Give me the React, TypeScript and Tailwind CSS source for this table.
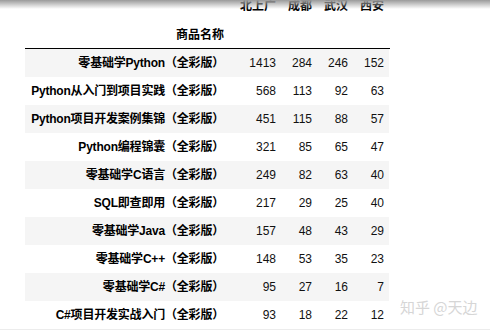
const rows: [string, number, number, number, number][] = [
  ["零基础学Python（全彩版）", 1413, 284, 246, 152],
  ["Python从入门到项目实践（全彩版）", 568, 113, 92, 63],
  ["Python项目开发案例集锦（全彩版）", 451, 115, 88, 57],
  ["Python编程锦囊（全彩版）", 321, 85, 65, 47],
  ["零基础学C语言（全彩版）", 249, 82, 63, 40],
  ["SQL即查即用（全彩版）", 217, 29, 25, 40],
  ["零基础学Java（全彩版）", 157, 48, 43, 29],
  ["零基础学C++（全彩版）", 148, 53, 35, 23],
  ["零基础学C#（全彩版）", 95, 27, 16, 7],
  ["C#项目开发实战入门（全彩版）", 93, 18, 22, 12],
];

const grid = "grid grid-cols-[205px_51px_36px_36px_36px] w-[364px]";

export default function App() {
  return (
    <div
      className="relative h-[330px] w-[490px] overflow-hidden bg-white text-[12px] text-[#111]"
      style={{ fontFamily: '"Liberation Sans", "Noto Sans CJK SC", sans-serif' }}
    >
      {/* top shadow */}
      <div className="absolute inset-x-0 top-0 h-[9px] bg-gradient-to-b from-[#9a9a9a] to-white/0" />

      <div className="pl-[25px]">
        {/* header */}
        <div className={`${grid} h-[21px] items-start font-bold text-black`}>
          <div />
          {["北上广", "成都", "武汉", "西安"].map((h) => (
            <div key={h} className="-mt-px pr-[5px] text-right leading-[14px]">
              {h}
            </div>
          ))}
        </div>
        <div className={`${grid} h-[27px] items-center font-bold text-black`}>
          <div className="pr-[6px] text-right">商品名称</div>
          <div />
          <div />
          <div />
          <div />
        </div>
        <div className="h-px w-[365px] bg-black" />

        {/* body */}
        {rows.map(([name, a, b, c, d], i) => (
          <div
            key={name}
            className={`${grid} h-[28px] items-center ${i % 2 === 0 ? "bg-[#f5f5f5]" : "bg-white"}`}
          >
            <div className="pr-[6px] text-right font-bold tracking-[-0.2px] text-black">{name}</div>
            {[a, b, c, d].map((n, j) => (
              <div key={j} className="pr-[5px] text-right">
                {n}
              </div>
            ))}
          </div>
        ))}
      </div>

      <div className="h-px w-full bg-[#ececec]" />

      {/* watermark */}
      <div
        className="absolute left-[400px] top-[297px] text-[15px] leading-[20px] text-[#d6d6d6]"
        style={{ fontFamily: '"Noto Sans CJK SC", sans-serif' }}
      >
        知乎 @天边
      </div>
    </div>
  );
}
